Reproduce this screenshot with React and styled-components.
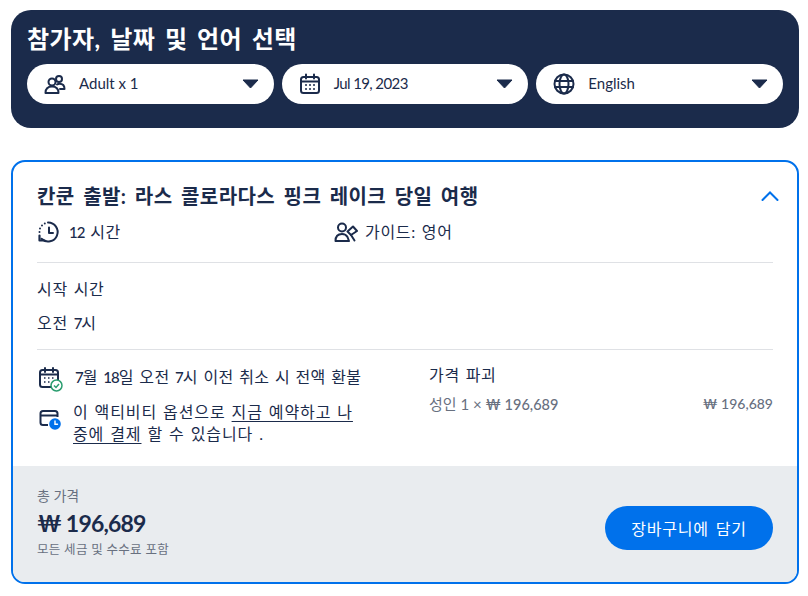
import React from "react";
import styled, { createGlobalStyle } from "styled-components";

const NAVY = "#1b2b4b";
const BLUE = "#0071eb";
const GREY = "#68707f";
const FONT = `"Lato", "Noto Sans CJK KR", sans-serif`;

const GlobalStyle = createGlobalStyle`
  html, body { margin: 0; padding: 0; background: #fff; }
  body { font-family: ${FONT}; color: ${NAVY}; width: 808px; }
  * { box-sizing: border-box; }
`;

const Page = styled.div`
  padding: 10px 9px 12px 11px;
  display: flex;
  flex-direction: column;
  gap: 32px;
`;

const Header = styled.section`
  height: 118px;
  background: ${NAVY};
  border-radius: 20px;
  padding: 12px 16px 0;
`;

const HeaderTitle = styled.h1`
  margin: 0 0 8px;
  font-size: 24px;
  line-height: 34px;
  font-weight: 700;
  letter-spacing: 0.4px;
  word-spacing: 3.5px;
  color: #fff;
`;

const Pills = styled.div`
  display: grid;
  grid-template-columns: repeat(3, 1fr);
  gap: 8px;
`;

const Pill = styled.div`
  height: 40px;
  background: #fff;
  border-radius: 20px;
  padding: 0 15px 0 16px;
  display: flex;
  align-items: center;
  gap: 12px;
  font-size: 15px;
`;

const PillLabel = styled.span`
  flex: 1;
  letter-spacing: ${({ $tight }) => ($tight ? "-0.6px" : "0")};
  margin-top: -2px;
`;

const Card = styled.section`
  height: 424px;
  border: 2px solid ${BLUE};
  border-radius: 14px;
  overflow: hidden;
  display: flex;
  flex-direction: column;
`;

const Body = styled.div`
  flex: 1;
  min-height: 0;
  padding: 19px 24px 0;
  font-size: 16px;
  letter-spacing: 0.7px;
  word-spacing: 1px;
`;

const TitleRow = styled.div`
  display: flex;
  align-items: center;
  justify-content: space-between;
  height: 30px;
  margin-right: -6px;
`;

const CardTitle = styled.h2`
  margin: 0;
  font-size: 20px;
  font-weight: 700;
  line-height: 30px;
  letter-spacing: 0.4px;
  word-spacing: 3.3px;
`;

const Facts = styled.div`
  display: grid;
  grid-template-columns: 297px 1fr;
  margin-top: 9px;
  height: 43px;
  border-bottom: 1px solid #dfe1e5;
`;

const Fact = styled.div`
  display: flex;
  align-items: flex-start;
  gap: ${({ $gap }) => $gap}px;
  line-height: 24px;
`;

const Num = styled.span`
  font-size: 15px;
  font-weight: 500;
  letter-spacing: -1px;
`;

const Start = styled.div`
  height: 87px;
  padding-top: 14px;
  border-bottom: 1px solid #dfe1e5;
  line-height: 24px;
`;

const StartValue = styled.div`
  margin-top: 10px;
`;

const Columns = styled.div`
  display: grid;
  grid-template-columns: 392px 1fr;
  padding-top: 16px;
`;

const Policy = styled.div`
  display: flex;
  gap: ${({ $gap }) => $gap}px;
  line-height: 22px;
  width: ${({ $width }) => $width}px;
  margin-bottom: ${({ $mb }) => $mb || 0}px;
  letter-spacing: ${({ $spacing }) => $spacing}px;
`;

const PolicyIcon = styled.span`
  flex: none;
  width: 26px;
  height: 26px;
  margin-top: ${({ $top }) => $top}px;
  display: flex;
  align-items: center;
  justify-content: center;
`;

const Underlined = styled.span`
  text-decoration: underline;
  text-underline-offset: 3px;
`;

const BreakdownTitle = styled.div`
  margin-top: -3px;
  line-height: 24px;
`;

const BreakdownRow = styled.div`
  display: flex;
  justify-content: space-between;
  margin-top: 6px;
  font-size: 15px;
  line-height: 22px;
  letter-spacing: 0;
  word-spacing: 0;
  color: ${GREY};
`;

const Amount = styled.span`
  font-size: ${({ $size }) => $size}px;
  font-weight: 500;
`;

const Footer = styled.div`
  flex: none;
  height: 116px;
  background: #e9ecef;
  padding: 20px 24px 0;
  display: flex;
  justify-content: space-between;
`;

const TotalLabel = styled.div`
  font-size: 14px;
  line-height: 20px;
  color: ${GREY};
`;

const TotalValue = styled.div`
  font-size: 23px;
  font-weight: 700;
  line-height: 32px;
  letter-spacing: -0.8px;
  margin-top: 1px;
`;

const TotalNote = styled.div`
  font-size: 12.5px;
  line-height: 18px;
  letter-spacing: 0.3px;
  margin-top: 2px;
  color: ${GREY};
`;

const CartButton = styled.button`
  width: 168px;
  height: 44px;
  margin-top: 20px;
  padding: 0;
  border: 0;
  border-radius: 22px;
  background: ${BLUE};
  color: #fff;
  font-family: ${FONT};
  font-size: 16px;
  letter-spacing: 0.8px;
  word-spacing: 2px;
`;

const Caret = () => (
  <svg width="17" height="10" viewBox="0 0 17 10">
    <path d="M1 1h15L8.500 9z" fill={NAVY} stroke={NAVY} strokeLinejoin="round" />
  </svg>
);

const Line = ({ size = 24, children }) => (
  <svg
    width={size}
    height={size}
    viewBox="0 0 24 24"
    fill="none"
    stroke={NAVY}
    strokeWidth="2"
    strokeLinecap="round"
    strokeLinejoin="round"
    style={{ flex: "none" }}
  >
    {children}
  </svg>
);

const PeopleIcon = () => (
  <Line>
    <circle cx="9" cy="10" r="3.500" />
    <circle cx="16" cy="7" r="3" />
    <path d="M2.500 21c0-4 2.500-6.500 6.500-6.500s6.500 2.500 6.500 6.500z" />
    <path d="M14 12.500c.8-.6 1.600-.8 2.500-.8 3 0 5 2 5 5.300h-4.500" />
  </Line>
);

const CalendarIcon = () => (
  <Line>
    <rect x="3" y="5" width="18" height="16" rx="2.500" />
    <path d="M3 9.500h18M8 2.500v4M16 2.500v4" />
    <path d="M8 13h.01M12 13h.01M16 13h.01M8 17h.01M12 17h.01M16 17h.01" />
  </Line>
);

const GlobeIcon = () => (
  <Line>
    <circle cx="12" cy="12" r="9.500" />
    <ellipse cx="12" cy="12" rx="4.500" ry="9.500" />
    <path d="M3 9h18M3 15h18" />
  </Line>
);

const ClockBackIcon = () => (
  <Line>
    <path d="M11 2.500a9.500 9.500 0 1 1-6.500 16.300" />
    <path d="M2.500 12v.01M3 8.500v.01M5 5.500v.01M7.800 3.400v.01" />
    <path d="M12 7.500v5.500h4" />
    <path d="M2.500 15.500v5h5" strokeWidth="2.200" />
  </Line>
);

const GuideIcon = () => (
  <Line>
    <circle cx="8" cy="7.500" r="4" />
    <path d="M1.500 21c0-4.500 2.500-7 6.500-7 2.800 0 4.500 1.200 5.500 3l1.500 4z" />
    <path d="M13.500 11.500l5.500-5 4 4.500-6 4z" />
    <path d="M17 15l3.500 5.500" />
  </Line>
);

const CancelIcon = () => (
  <svg width="26" height="26" viewBox="0 0 26 26" fill="none">
    <rect x="3" y="4" width="18" height="17" rx="2.500" stroke={NAVY} strokeWidth="2" />
    <path d="M3 8.500h18M8 2v4M16 2v4" stroke={NAVY} strokeWidth="2" strokeLinecap="round" />
    <path d="M7 12h1.500M11 12h1.500M15 12h1.500M7 16h1.500M11 16h1.500" stroke={NAVY} strokeWidth="1.400" />
    <circle cx="19.500" cy="19.500" r="5.500" fill="#fff" stroke="#2a9d6f" strokeWidth="1.500" />
    <path d="M17 19.500l2 2 3-3.500" stroke="#2a9d6f" strokeWidth="1.500" fill="none" />
  </svg>
);

const PayLaterIcon = () => (
  <svg width="26" height="26" viewBox="0 0 26 26" fill="none">
    <path d="M11 20H6a2.500 2.500 0 0 1-2.500-2.500v-9A2.500 2.500 0 0 1 6 6h12a2.500 2.500 0 0 1 2.500 2.500V12" stroke={NAVY} strokeWidth="2" />
    <path d="M4 10.500h16" stroke={NAVY} strokeWidth="2" />
    <circle cx="18" cy="19" r="5.800" fill={BLUE} />
    <path d="M18 16v3.300h2.500" stroke="#fff" strokeWidth="1.400" strokeLinecap="round" />
  </svg>
);

const Chevron = () => (
  <svg width="18" height="10" viewBox="0 0 18 10" fill="none">
    <path d="M1.500 9L9 1.500 16.500 9" stroke={BLUE} strokeWidth="2" strokeLinecap="round" />
  </svg>
);

const pills = [
  { label: "Adult x 1", icon: <PeopleIcon /> },
  { label: "Jul 19, 2023", icon: <CalendarIcon />, tight: true },
  { label: "English", icon: <GlobeIcon /> },
];

export default function App() {
  return (
    <>
      <GlobalStyle />
      <Page>
        <Header>
          <HeaderTitle>참가자, 날짜 및 언어 선택</HeaderTitle>
          <Pills>
            {pills.map((pill) => (
              <Pill key={pill.label}>
                {pill.icon}
                <PillLabel $tight={pill.tight}>{pill.label}</PillLabel>
                <Caret />
              </Pill>
            ))}
          </Pills>
        </Header>

        <Card>
          <Body>
            <TitleRow>
              <CardTitle>칸쿤 출발: 라스 콜로라다스 핑크 레이크 당일 여행</CardTitle>
              <Chevron />
            </TitleRow>
            <Facts>
              <Fact $gap={8}>
                <ClockBackIcon />
                <span><Num>12</Num> 시간</span>
              </Fact>
              <Fact $gap={7}>
                <GuideIcon />
                <span>가이드: 영어</span>
              </Fact>
            </Facts>
            <Start>
              <div>시작 시간</div>
              <StartValue>오전 <Num>7</Num>시</StartValue>
            </Start>
            <Columns>
              <div>
                <Policy $mb={9} $gap={12} $width={360} $spacing={0.4}>
                  <PolicyIcon $top={0}><CancelIcon /></PolicyIcon>
                  <span>
                    <Num>7</Num>월 <Num>18</Num>일 오전 <Num>7</Num>시 이전 취소 시 전액 환불
                  </span>
                </Policy>
                <Policy $gap={10} $width={318} $spacing={0.9}>
                  <PolicyIcon $top={4}><PayLaterIcon /></PolicyIcon>
                  <span>
                    이 액티비티 옵션으로 <Underlined>지금 예약하고 나중에 결제</Underlined> 할 수 있습니다 .
                  </span>
                </Policy>
              </div>
              <div>
                <BreakdownTitle>가격 파괴</BreakdownTitle>
                <BreakdownRow>
                  <span>성인 1 × <Amount $size={14.5}>₩ 196,689</Amount></span>
                  <Amount $size={14}>₩ 196,689</Amount>
                </BreakdownRow>
              </div>
            </Columns>
          </Body>
          <Footer>
            <div>
              <TotalLabel>총 가격</TotalLabel>
              <TotalValue>₩ 196,689</TotalValue>
              <TotalNote>모든 세금 및 수수료 포함</TotalNote>
            </div>
            <CartButton>장바구니에 담기</CartButton>
          </Footer>
        </Card>
      </Page>
    </>
  );
}
